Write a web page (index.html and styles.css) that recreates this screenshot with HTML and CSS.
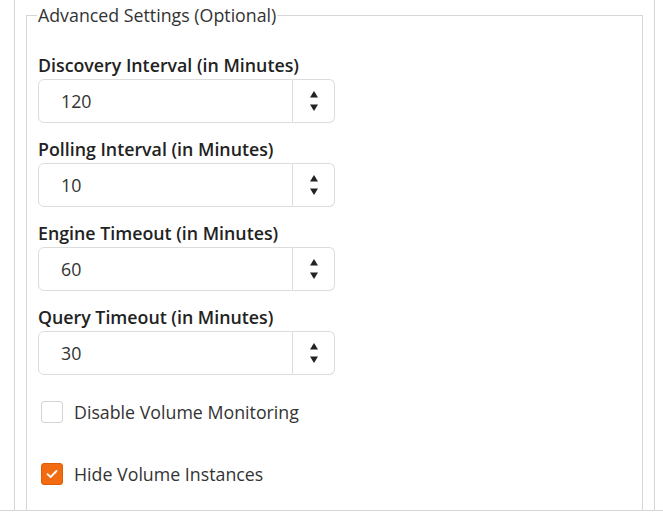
FILE: index.html
```html
<!DOCTYPE html>
<html>
<head>
<meta charset="utf-8">
<link rel="stylesheet" href="styles.css">
</head>
<body>
<div class="page">
  <fieldset class="settings">
    <legend class="settings-legend">Advanced Settings (Optional)</legend>

    <div class="form-group">
      <label class="field-label">Discovery Interval (in Minutes)</label>
      <div class="input-group">
        <div class="num-input">120</div>
        <div class="spinner">
          <svg width="10" height="24" viewBox="0 0 10 24"><path d="M5 2 L9 8.5 L1 8.5 Z" fill="#222"/><path d="M1 15.5 L9 15.5 L5 22 Z" fill="#222"/></svg>
        </div>
      </div>
    </div>

    <div class="form-group">
      <label class="field-label">Polling Interval (in Minutes)</label>
      <div class="input-group">
        <div class="num-input">10</div>
        <div class="spinner">
          <svg width="10" height="24" viewBox="0 0 10 24"><path d="M5 2 L9 8.5 L1 8.5 Z" fill="#222"/><path d="M1 15.5 L9 15.5 L5 22 Z" fill="#222"/></svg>
        </div>
      </div>
    </div>

    <div class="form-group">
      <label class="field-label">Engine Timeout (in Minutes)</label>
      <div class="input-group">
        <div class="num-input">60</div>
        <div class="spinner">
          <svg width="10" height="24" viewBox="0 0 10 24"><path d="M5 2 L9 8.5 L1 8.5 Z" fill="#222"/><path d="M1 15.5 L9 15.5 L5 22 Z" fill="#222"/></svg>
        </div>
      </div>
    </div>

    <div class="form-group">
      <label class="field-label">Query Timeout (in Minutes)</label>
      <div class="input-group">
        <div class="num-input">30</div>
        <div class="spinner">
          <svg width="10" height="24" viewBox="0 0 10 24"><path d="M5 2 L9 8.5 L1 8.5 Z" fill="#222"/><path d="M1 15.5 L9 15.5 L5 22 Z" fill="#222"/></svg>
        </div>
      </div>
    </div>

    <div class="check-list">
      <div class="check-row">
        <span class="checkbox"></span>
        <span class="check-text">Disable Volume Monitoring</span>
      </div>
      <div class="check-row">
        <span class="checkbox checked">
          <svg width="12" height="10" viewBox="0 0 12 10"><path d="M1.5 5.2 L4.6 8 L10.5 2" fill="none" stroke="#fff" stroke-width="1.8" stroke-linecap="round" stroke-linejoin="round"/></svg>
        </span>
        <span class="check-text">Hide Volume Instances</span>
      </div>
    </div>
  </fieldset>
</div>
<div class="footer-line"></div>
</body>
</html>
```

FILE: styles.css
```css
html, body {
  margin: 0;
  padding: 0;
  background: #fff;
}
body {
  width: 663px;
  height: 515px;
  overflow: hidden;
  font-family: "Open Sans", "Noto Sans", sans-serif;
  color: #333;
}
.page {
  margin-left: 14px;
  width: 641px;
  height: 510px;
  border-left: 1px solid #d6d6d6;
  border-right: 1px solid #d6d6d6;
  padding: 3px 11px 0 11px;
  box-sizing: border-box;
  overflow: hidden;
}
.settings {
  margin: 0;
  border: 1px solid #d6d6d6;
  padding: 24px 11px 40px 11px;
  min-width: 0;
  height: 600px;
  box-sizing: border-box;
}
.settings-legend {
  font-size: 17.8px;
  line-height: 24px;
  padding: 0 1px;
  margin-left: -1px;
  color: #333;
}
.form-group {
  margin-bottom: 12px;
}
.field-label {
  display: block;
  font-size: 17.8px;
  line-height: 24px;
  font-weight: 600;
  color: #222;
  padding-top: 2px;
  margin-bottom: 2px;
}
.input-group {
  display: flex;
  width: 297px;
  height: 44px;
}
.num-input {
  flex: 1;
  border: 1px solid #dcdcdc;
  border-radius: 6px 0 0 6px;
  padding-left: 22px;
  font-size: 17.8px;
  line-height: 42px;
  color: #333;
}
.spinner {
  width: 41px;
  border: 1px solid #dcdcdc;
  border-left: none;
  border-radius: 0 6px 6px 0;
  display: flex;
  align-items: center;
  justify-content: center;
}
.check-list {
  padding-top: 14px;
  display: flex;
  flex-direction: column;
  gap: 40px;
}
.check-row {
  display: flex;
  align-items: center;
  gap: 11px;
  padding-left: 3px;
}
.checkbox {
  width: 22px;
  height: 22px;
  box-sizing: border-box;
  border: 1px solid #d4d4d4;
  border-radius: 3px;
  background: #fff;
  display: flex;
  align-items: center;
  justify-content: center;
}
.checkbox.checked {
  background: #f26b10;
  border-color: #e05c05;
}
.check-text {
  font-size: 17.8px;
  line-height: 22px;
  color: #333;
}
.footer-line {
  height: 0;
  border-top: 1px solid #d6d6d6;
  width: 663px;
}
```
